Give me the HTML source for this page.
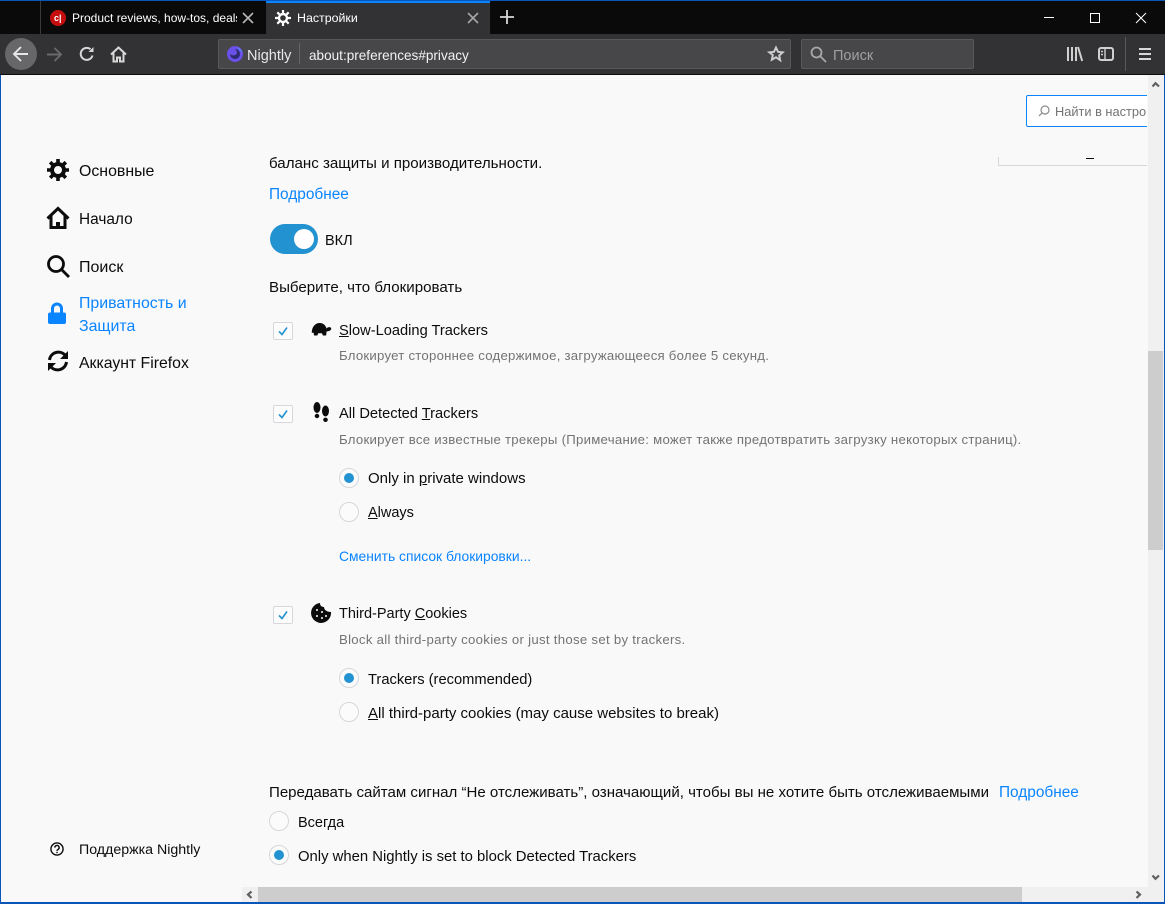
<!DOCTYPE html>
<html><head><meta charset="utf-8"><style>
html,body{margin:0;padding:0;width:1165px;height:904px;overflow:hidden;background:#f9f9fa}
body{position:relative;font-family:"Liberation Sans","Noto Sans CJK JP",sans-serif;font-size:14.5px;color:#0c0c0d}
.a{position:absolute}
.t{position:absolute;white-space:nowrap;line-height:20px;margin-top:1px}
.b{color:#0a84ff}.g{color:#737373;font-size:13.2px;margin-top:0}
.cb{position:absolute;left:273px;width:18px;height:16px;background:#fcfcfc;border:1px solid #d7d7db;border-radius:2px}
.r{position:absolute;width:18px;height:18px;border:1px solid #d7d7db;border-radius:50%;background:#fbfbfb}
.r.on:after{content:"";position:absolute;left:4px;top:4px;width:10px;height:10px;border-radius:50%;background:#2292d0}
u{text-underline-offset:1px}
svg{position:absolute;overflow:visible}
</style></head><body>
<div class="a" style="left:0;top:0;width:1165px;height:1px;background:#0a55b8"></div>
<div class="a" style="left:0;top:1px;width:1165px;height:33px;background:#0a0a0b"></div>
<div class="a" style="left:40px;top:1px;width:1px;height:33px;background:#3a3a3c"></div>
<div class="a" style="left:266px;top:1px;width:224px;height:33px;background:#323234"></div>
<div class="a" style="left:266px;top:1px;width:224px;height:2px;background:#0a84ff"></div>
<div class="a" style="left:50px;top:10px;width:16px;height:16px;border-radius:50%;background:#c50f0f"></div>
<div class="t" style="left:54px;top:8px;color:#fff;font:bold 9px/20px 'Liberation Sans',sans-serif;margin-top:0">c|</div>
<div class="a" style="left:72px;top:8px;width:165px;height:20px;overflow:hidden"><div class="t" style="left:0;top:0;color:#fff;font-size:12px;margin-top:0">Product reviews, how-tos, deals</div></div>
<svg style="left:242px;top:12px" width="12" height="12" fill="none" stroke="#b5b5b6" stroke-width="1.6"><path d="M1 1l10 10M11 1L1 11"/></svg>
<svg style="left:275px;top:10px" width="16" height="16" viewBox="0 0 16 16"><circle cx="8" cy="8" r="4" fill="none" stroke="#fff" stroke-width="2.4"/><g stroke="#fff" stroke-width="2.2"><path d="M8 0v3M8 13v3M0 8h3M13 8h3M2.3 2.3l2.2 2.2M11.5 11.5l2.2 2.2M13.7 2.3l-2.2 2.2M4.5 11.5l-2.2 2.2"/></g></svg>
<div class="t" style="left:297px;top:8px;color:#fff;font-size:12.4px;margin-top:0">Настройки</div>
<svg style="left:467px;top:12px" width="12" height="12" fill="none" stroke="#a5a5a6" stroke-width="1.6"><path d="M1 1l10 10M11 1L1 11"/></svg>
<svg style="left:500px;top:10px" width="14" height="14" fill="none" stroke="#d8d8d8" stroke-width="1.8"><path d="M7 0v14M0 7h14"/></svg>
<svg style="left:1044px;top:12px" width="110" height="12" fill="none" stroke="#fff" stroke-width="1"><path d="M0 5.5h10"/><rect x="46.5" y="1.500" width="9" height="9"/><path d="M92 1l10 10M102 1L92 11"/></svg>

<div class="a" style="left:0;top:34px;width:1165px;height:40px;background:#323234"></div>
<div class="a" style="left:0;top:74px;width:1165px;height:1px;background:#0c0c0d"></div>
<div class="a" style="left:5px;top:38px;width:32px;height:32px;border-radius:50%;background:#67676a"></div>
<svg style="left:12px;top:45px" width="18" height="18" fill="none" stroke="#e6e6e6" stroke-width="1.9"><path d="M16 9H2M9 2L2 9l7 7"/></svg>
<svg style="left:46px;top:46px" width="17" height="17" fill="none" stroke="#6a6a6c" stroke-width="1.9"><path d="M1 8.500h14M8.500 2l6.500 6.500-6.500 6.500"/></svg>
<svg style="left:79px;top:46px" width="16" height="16" fill="none" stroke="#d8d8d8" stroke-width="2"><path d="M13.500 9.500A6 6 0 1 1 11.500 3.200"/><path d="M14.500 1v5h-5z" fill="#d8d8d8" stroke="none"/></svg>
<svg style="left:110px;top:46px" width="17" height="17" fill="none" stroke="#d8d8d8" stroke-width="2"><path d="M1 8.500L8.500 1.500 16 8.500"/><path d="M3.500 7v8.500h3.500v-4h3v4h3.500V7"/></svg>

<div class="a" style="left:218px;top:39px;width:571px;height:28px;background:#474749;border:1px solid #58585a;border-radius:2px"></div>
<svg style="left:227px;top:46px" width="16" height="16" viewBox="0 0 16 16"><circle cx="8" cy="8" r="8" fill="#6a50e8"/><path d="M8 3a5 5 0 1 1-5 5c2 2 6 2 7-1 0-2-1-3-2-4z" fill="#2c2b6e"/><path d="M10 1c3 1 5 4 5 6-1-2-3-4-5-6z" fill="#4aa3f0"/></svg>
<div class="t" style="left:247px;top:45px;color:#e8e8e8;font-size:14.5px">Nightly</div>
<div class="a" style="left:299px;top:43px;width:1px;height:21px;background:#666668"></div>
<div class="t" style="left:309px;top:45px;color:#f2f2f2;font-size:13.57px">about:preferences#privacy</div>
<svg style="left:768px;top:46px" width="16" height="16" viewBox="0 0 16 16" fill="none" stroke="#cfcfcf" stroke-width="1.900"><path d="M8 1.500l2 4.300 4.700.5-3.500 3.200 1 4.700L8 11.300l-4.200 2.400 1-4.700L1.300 6.300 6 5.800z"/></svg>
<div class="a" style="left:801px;top:39px;width:171px;height:28px;background:#474749;border:1px solid #58585a;border-radius:2px"></div>
<svg style="left:810px;top:46px" width="16" height="16" fill="none" stroke="#a8a8a8" stroke-width="1.800"><circle cx="6.500" cy="6.500" r="5"/><path d="M10 10l6 6"/></svg>
<div class="t" style="left:833px;top:45px;color:#a0a0a2;font-size:14.5px">Поиск</div>
<svg style="left:1067px;top:47px" width="16" height="15" fill="none" stroke="#d0d0d0" stroke-width="2"><path d="M1 0v14M5 0v14M9 0v14M11 0l4.200 14"/></svg>
<svg style="left:1098px;top:47px" width="16" height="15" fill="none" stroke="#d0d0d0" stroke-width="2"><rect x="1" y="1" width="14" height="12" rx="2"/><path d="M7 1v12M3 4.500h2M3 7.500h2" stroke-width="1.400"/></svg>
<div class="a" style="left:1125px;top:37px;width:1px;height:34px;background:#58585a"></div>
<svg style="left:1139px;top:48px" width="12" height="12" stroke="#d8d8d8" stroke-width="2"><path d="M0 1h12M0 6h12M0 11h12"/></svg>

<div class="a" style="left:0;top:75px;width:1px;height:829px;background:#0a55b8"></div>
<div class="a" style="left:1164px;top:75px;width:1px;height:829px;background:#0a55b8"></div>
<div class="a" style="left:0;top:902px;width:1165px;height:2px;background:#0a55b8"></div>
<div class="a" style="left:1148px;top:75px;width:16px;height:827px;background:#f0f0f0"></div>
<div class="a" style="left:1148px;top:351px;width:15px;height:199px;background:#cdcdcd"></div>
<svg style="left:1152px;top:81px" width="8" height="6" fill="none" stroke="#606060" stroke-width="2.200"><path d="M0.500 5.500L3.500 2.200l3.500 3.300"/></svg>
<svg style="left:1152px;top:875px" width="8" height="6" fill="none" stroke="#606060" stroke-width="2.200"><path d="M0.500 0.500L3.500 3.800 7 .5"/></svg>
<div class="a" style="left:242px;top:887px;width:906px;height:15px;background:#f0f0f0"></div>
<div class="a" style="left:258px;top:887px;width:764px;height:15px;background:#cdcdcd"></div>
<svg style="left:246px;top:891px" width="6" height="8" fill="none" stroke="#606060" stroke-width="2.200"><path d="M5.500 .5L2 3.500l3.500 3.500"/></svg>
<svg style="left:1136px;top:891px" width="6" height="8" fill="none" stroke="#606060" stroke-width="2.200"><path d="M.5 .5L4 3.500.5 7"/></svg>

<div class="a" style="left:1026px;top:95px;width:121px;height:32px;border:1px solid #0a84ff;border-right:0;border-radius:2px 0 0 2px;background:#fff;overflow:hidden;box-sizing:border-box"><div class="t" style="left:28px;top:5px;color:#737373;font-size:12.8px">Найти в настро</div></div>
<svg style="left:1038px;top:105px" width="12" height="12" fill="none" stroke="#8a8a8a" stroke-width="1.200"><circle cx="7" cy="5" r="4"/><path d="M4 8l-3 3"/></svg>
<div class="a" style="left:998px;top:157px;width:149px;border-left:1px solid #d7d7db;border-bottom:1px solid #d7d7db;box-sizing:border-box;height:9px"></div>
<div class="a" style="left:1086px;top:158px;width:8px;height:1px;background:#0c0c0d"></div>

<svg style="left:46px;top:158px" width="24" height="24" viewBox="0 0 24 24"><circle cx="12" cy="12" r="6" fill="none" stroke="#0c0c0d" stroke-width="4"/><g stroke="#0c0c0d" stroke-width="3.600"><path d="M12 1v4M12 19v4M1 12h4M19 12h4M4.200 4.200l2.800 2.800M17 17l2.800 2.800M19.800 4.200L17 7M7 17l-2.800 2.800"/></g></svg>
<div class="t" style="left:79px;top:161px;font-size:15.9px">Основные</div>
<svg style="left:46px;top:206px" width="24" height="24" viewBox="0 0 24 24" fill="none" stroke="#0c0c0d" stroke-width="3"><path d="M1.500 12.500L12 2.500l10.500 10"/><path d="M5 10v11.500h14V10"/><path d="M12 22v-6" stroke-width="4"/></svg>
<div class="t" style="left:79px;top:209px;font-size:15.4px">Начало</div>
<svg style="left:46px;top:254px" width="24" height="24" viewBox="0 0 24 24" fill="none" stroke="#0c0c0d" stroke-width="2.800"><circle cx="10" cy="10" r="7.500"/><path d="M15.500 15.500L23 23"/></svg>
<div class="t" style="left:79px;top:257px;font-size:16px">Поиск</div>
<svg style="left:48px;top:302px" width="18" height="22" viewBox="0 0 18 22"><path d="M4.500 12V6.500a4.500 4.500 0 0 1 9 0V12" fill="none" stroke="#0a84ff" stroke-width="3"/><rect y="10.500" width="18" height="11.500" rx="2" fill="#0a84ff"/></svg>
<div class="t b" style="left:79px;top:293px;font-size:15.9px">Приватность и</div>
<div class="t b" style="left:79px;top:316px;font-size:15.9px">Защита</div>
<svg style="left:46px;top:349px" width="24" height="24" viewBox="0 0 24 24" fill="none" stroke="#0c0c0d" stroke-width="3"><path d="M3.500 11a9 9 0 0 1 15.500-5"/><path d="M20.500 13a9 9 0 0 1-15.500 5"/><path d="M22 2v8h-8z" fill="#0c0c0d" stroke="none"/><path d="M2 22v-8h8z" fill="#0c0c0d" stroke="none"/></svg>
<div class="t" style="left:79px;top:353px;font-size:15.8px">Аккаунт Firefox</div>
<svg style="left:50px;top:842px" width="14" height="14" viewBox="0 0 15 15" fill="none" stroke="#0c0c0d" stroke-width="1.500"><circle cx="7.500" cy="7.500" r="6.500"/><path d="M5.200 6a2.300 2.300 0 1 1 3.400 2c-.7.400-1.100.8-1.100 1.500"/><path d="M7.500 10.500v1.500"/></svg>
<div class="t" style="left:79px;top:839px;font-size:14.2px">Поддержка Nightly</div>

<div class="t" style="left:269px;top:153px;font-size:15.1px">баланс защиты и производительности.</div>
<div class="t b" style="left:269px;top:184px;font-size:15.4px">Подробнее</div>
<div class="a" style="left:270px;top:224px;width:48px;height:30px;border-radius:15px;background:#2292d0"></div>
<div class="a" style="left:294px;top:229px;width:20px;height:20px;border-radius:50%;background:#fff"></div>
<div class="t" style="left:325px;top:230px;font-size:14.5px">ВКЛ</div>
<div class="t" style="left:269px;top:277px;font-size:15.1px">Выберите, что блокировать</div>

<div class="cb" style="top:322px"></div>
<svg style="left:278px;top:327px" width="10" height="9" fill="none" stroke="#2292d0" stroke-width="1.600"><path d="M1 4.500l3 3 5-7"/></svg>
<svg style="left:311px;top:323px" width="21" height="13" viewBox="0 0 21 14" fill="#0c0c0d"><path d="M0 10.500C0 4 4 0 8.500 0S15 3 16 6c1-2 5-2 5 0s-3 3-5 3l-.5 4.500h-3.500l-1-2.500H7l-1 2.500H2.500L2 10.500z"/></svg>
<div class="t" style="left:339px;top:320px;font-size:14.65px"><u>S</u>low-Loading Trackers</div>
<div class="t g" style="left:339px;top:346px;letter-spacing:.24px">Блокирует стороннее содержимое, загружающееся более 5 секунд.</div>

<div class="cb" style="top:405px"></div>
<svg style="left:278px;top:410px" width="10" height="9" fill="none" stroke="#2292d0" stroke-width="1.600"><path d="M1 4.500l3 3 5-7"/></svg>
<svg style="left:313px;top:402px" width="17" height="20" viewBox="0 0 17 20" fill="#0c0c0d"><ellipse cx="4" cy="5.500" rx="3.500" ry="5.500"/><ellipse cx="12.500" cy="9" rx="3.500" ry="5.500"/><ellipse cx="4" cy="14" rx="2.300" ry="2.200"/><ellipse cx="12.500" cy="17.800" rx="2.300" ry="2.200"/></svg>
<div class="t" style="left:339px;top:403px;font-size:14.65px">All Detected <u>T</u>rackers</div>
<div class="t g" style="left:339px;top:430px;letter-spacing:.27px">Блокирует все известные трекеры (Примечание: может также предотвратить загрузку некоторых страниц).</div>
<div class="r on" style="left:339px;top:468px"></div>
<div class="t" style="left:368px;top:468px;font-size:15px">Only in <u>p</u>rivate windows</div>
<div class="r" style="left:339px;top:502px"></div>
<div class="t" style="left:368px;top:502px;font-size:14.5px"><u>A</u>lways</div>
<div class="t b" style="left:339px;top:545px;font-size:13.87px">Сменить список блокировки...</div>

<div class="cb" style="top:606px"></div>
<svg style="left:278px;top:611px" width="10" height="9" fill="none" stroke="#2292d0" stroke-width="1.600"><path d="M1 4.500l3 3 5-7"/></svg>
<svg style="left:311px;top:603px" width="20" height="20" viewBox="0 0 20 20"><path d="M9 0c0 3 2 4 4 4 0 3 3 5 7 5a10 10 0 1 1-11-9z" fill="#0c0c0d"/><g fill="#fff"><circle cx="6" cy="7" r="1"/><circle cx="11" cy="9" r="1"/><circle cx="6" cy="13" r="1"/><circle cx="11" cy="15" r="1"/><circle cx="15" cy="13" r="1"/></g></svg>
<div class="t" style="left:339px;top:603px;font-size:14.5px">Third-Party <u>C</u>ookies</div>
<div class="t g" style="left:339px;top:630px;letter-spacing:.29px">Block all third-party cookies or just those set by trackers.</div>
<div class="r on" style="left:339px;top:668px"></div>
<div class="t" style="left:368px;top:669px;font-size:14.7px">Trackers (recommended)</div>
<div class="r" style="left:339px;top:702px"></div>
<div class="t" style="left:368px;top:703px;font-size:15px"><u>A</u>ll third-party cookies (may cause websites to break)</div>

<div class="t" style="left:269px;top:782px;font-size:15.05px">Передавать сайтам сигнал “Не отслеживать”, означающий, чтобы вы не хотите быть отслеживаемыми</div>
<div class="t b" style="left:999px;top:782px;font-size:15.4px">Подробнее</div>
<div class="r" style="left:269px;top:811px"></div>
<div class="t" style="left:298px;top:812px;font-size:14.5px">Всегда</div>
<div class="r on" style="left:269px;top:845px"></div>
<div class="t" style="left:298px;top:846px;font-size:14.85px">Only when Nightly is set to block Detected Trackers</div>
</body></html>
